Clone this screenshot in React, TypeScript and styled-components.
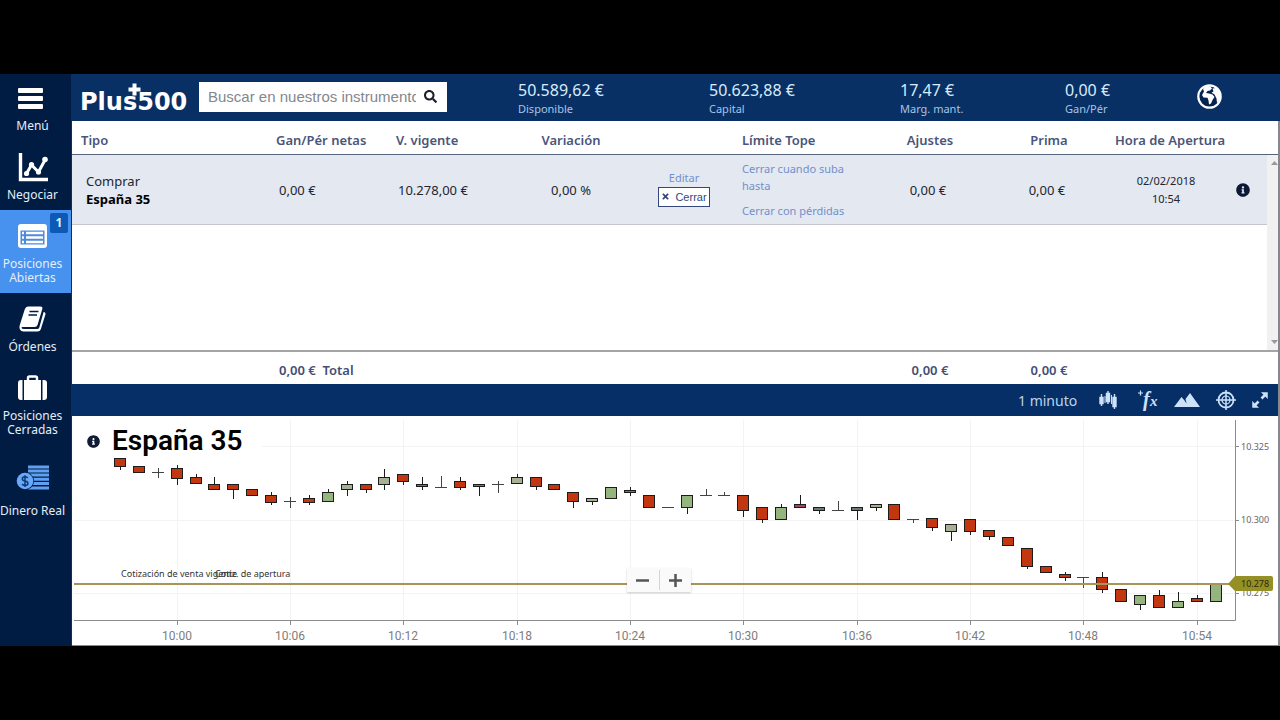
import React from "react";
import styled, { createGlobalStyle } from "styled-components";
import { FaSearch, FaInfoCircle, FaTimes } from "react-icons/fa";

const Global = createGlobalStyle`
  * { box-sizing: border-box; }
  body { margin: 0; background: #000; font-family: "Noto Sans", "Open Sans", sans-serif; }
  button, input, select { font-family: inherit; }
`;

const Page = styled.div`
  min-height: 100vh;
  display: flex;
  flex-direction: column;
  justify-content: center;
`;

const Shell = styled.div`
  display: flex;
  background: #011c42;
`;

/* ---------- Sidebar ---------- */

const Sidebar = styled.nav`
  flex: 0 0 72px;
  min-width: 0;
  display: flex;
  flex-direction: column;
  background: #011c42;
  border-right: 1px solid #0b2e63;
`;

const NavItem = styled.button<{ $active?: boolean; $first?: boolean; $roomy?: boolean }>`
  position: relative;
  display: flex;
  flex-direction: column;
  align-items: center;
  gap: ${(p) => (p.$roomy ? 12 : 7)}px;
  width: 100%;
  padding: ${(p) => (p.$roomy ? 19 : p.$first ? 10 : 12)}px 6px 8px 0;
  border: 0;
  background: ${(p) => (p.$active ? "#4792ee" : "transparent")};
  color: #e4edf8;
  font-size: 12px;
  line-height: 14px;
  text-align: center;
  cursor: pointer;
`;

const NavIcon = styled.span`
  display: flex;
  align-items: center;
  justify-content: center;
  height: 28px;
`;

const NavLabel = styled.span`
  white-space: pre;
`;

const Badge = styled.span`
  position: absolute;
  top: 3px;
  right: 3px;
  width: 18px;
  height: 20px;
  border-radius: 2px;
  background: #0c5ab5;
  color: #d8f0ff;
  font-size: 12px;
  font-weight: 700;
  line-height: 20px;
`;

/* ---------- Header ---------- */

const Main = styled.div`
  flex: 1;
  min-width: 0;
`;

const Header = styled.header`
  display: flex;
  align-items: center;
  height: 47px;
  padding-bottom: 2px;
  background: #083064;
`;

const Logo = styled.a`
  position: relative;
  flex: 0 0 119px;
  margin-left: 8px;
  padding-top: 10px;
  color: #fff;
  font-family: "DejaVu Sans", sans-serif;
  font-size: 24px;
  font-weight: 700;
  line-height: 28px;
  text-decoration: none;
`;

const LogoCross = styled.svg`
  position: absolute;
  left: 48px;
  top: 5px;
`;

const SearchBox = styled.label`
  display: flex;
  align-items: center;
  flex: 0 0 248px;
  height: 30px;
  padding: 0 10px 0 9px;
  background: #fff;
  color: #1a2029;
`;

const SearchInput = styled.input`
  flex: 1;
  min-width: 0;
  margin-right: 8px;
  padding: 0;
  border: 0;
  outline: 0;
  background: transparent;
  font-family: "Liberation Sans", sans-serif;
  font-size: 15px;
  &::placeholder { color: #84878b; opacity: 1; }
`;

const Stats = styled.div`
  flex: 1;
  display: grid;
  grid-template-columns: 191fr 191fr 165fr 131fr 84fr;
  align-items: center;
  padding-left: 71px;
`;

const Stat = styled.div`
  padding-top: 5px;
  color: #c5dcf5;
  white-space: nowrap;
`;

const StatValue = styled.div`
  font-size: 16px;
  line-height: 20px;
  color: #d8ebfc;
`;

const StatName = styled.div`
  font-size: 11px;
  line-height: 18px;
  color: #a9c4e6;
`;

const IconButton = styled.button<{ $w?: number }>`
  display: flex;
  align-items: center;
  justify-content: center;
  width: ${(p) => p.$w ?? 26}px;
  padding: 0;
  border: 0;
  background: transparent;
  color: inherit;
  cursor: pointer;
`;

/* ---------- Positions table ---------- */

const Panel = styled.section`
  background: #fff;
  border-right: 2px solid #85888d;
`;

const Table = styled.table`
  width: 100%;
  table-layout: fixed;
  border-collapse: separate;
  border-spacing: 0;
  font-size: 13px;
  color: #22262e;
`;

const Th = styled.th<{ $align?: string; $pad?: number }>`
  height: 34px;
  padding: 5px 0 0 ${(p) => p.$pad ?? 0}px;
  border-bottom: 1px solid #55637c;
  color: #4b557a;
  font-size: 13px;
  font-weight: 600;
  text-align: ${(p) => p.$align ?? "left"};
  white-space: nowrap;
`;

const Td = styled.td<{ $align?: string; $pad?: number }>`
  height: 70px;
  padding: 0 0 0 ${(p) => p.$pad ?? 0}px;
  background: #e4e8f1;
  border-bottom: 1px solid #c4c7cd;
  text-align: ${(p) => p.$align ?? "left"};
  line-height: 18px;
`;

const EmptyCell = styled.td`
  height: 125px;
  padding: 0;
`;

const TotalCell = styled.td<{ $align?: string; $pad?: number }>`
  height: 34px;
  padding: 3px 0 0 ${(p) => p.$pad ?? 0}px;
  border-top: 2px solid #a3a4a8;
  color: #444e74;
  font-weight: 600;
  text-align: ${(p) => p.$align ?? "left"};
  white-space: nowrap;
`;

const Shift = styled.span`
  display: inline-block;
  padding-right: 4px;
`;

const OpenTime = styled(Shift)`
  font-size: 11px;
`;

const Instrument = styled.strong`
  display: block;
  color: #000;
  font-weight: 700;
`;

const TextLink = styled.a`
  display: block;
  max-width: 110px;
  color: #7290cb;
  font-size: 11px;
  line-height: 17px;
  text-decoration: none;
  & + & { margin-top: 8px; }
`;

const Actions = styled.div`
  display: flex;
  flex-direction: column;
  align-items: center;
  gap: 1px;
  padding-bottom: 4px;
`;

const CloseButton = styled.button`
  display: flex;
  align-items: center;
  justify-content: center;
  gap: 5px;
  width: 52px;
  height: 20px;
  padding: 0;
  border: 1px solid #34477d;
  background: #fff;
  color: #34477d;
  font-family: "Liberation Sans", sans-serif;
  font-size: 11px;
`;

const TrackCell = styled.td`
  padding: 0;
  background: #f1f1f2;
`;

const Track = styled.div`
  display: flex;
  flex-direction: column;
  justify-content: space-between;
  align-items: flex-end;
  height: 195px;
  padding: 6px 0;
`;

/* ---------- Chart ---------- */

const Toolbar = styled.div`
  display: flex;
  align-items: center;
  justify-content: flex-end;
  gap: 16px;
  height: 32px;
  padding-right: 10px;
  background: #052f66;
  color: #cde2fa;
`;

const Interval = styled.select`
  appearance: none;
  width: 64px;
  padding: 0;
  border: 0;
  background: transparent;
  color: #bfd3ee;
  font-size: 14px;
`;

const ChartArea = styled.div`
  position: relative;
  border-bottom: 1px solid #8a8a8a;
`;

const ChartSvg = styled.svg`
  display: block;
  width: 100%;
  height: auto;
`;

const ChartTitle = styled.div`
  position: absolute;
  left: 15px;
  top: 8px;
  display: flex;
  align-items: center;
  gap: 12px;
  color: #111b33;
`;

const Heading = styled.h1`
  margin: 0;
  color: #000;
  font-family: Roboto, sans-serif;
  font-size: 28px;
  font-weight: 600;
  line-height: 34px;
`;

const Zoom = styled.div`
  position: absolute;
  left: 46%;
  bottom: 53px;
  display: flex;
  align-items: center;
  height: 24px;
  background: #fafafa;
  box-shadow: 0 1px 2px rgba(0, 0, 0, 0.2);
  color: #555;
`;

const ZoomButton = styled.button`
  display: flex;
  align-items: center;
  justify-content: center;
  width: 32px;
  height: 20px;
  padding: 0;
  border: 0;
  background: transparent;
  color: inherit;
  & + & { border-left: 1px solid #d4d4d4; }
`;

/* ---------- Icons ---------- */

const MenuIcon = () => (
  <svg width="29" height="22" viewBox="0 0 29 22" fill="#fff">
    <rect y="1" width="25" height="5" rx="1" />
    <rect y="9" width="25" height="5" rx="1" />
    <rect y="17" width="25" height="5" rx="1" />
  </svg>
);

const TradeIcon = () => (
  <svg width="30" height="30" viewBox="0 0 30 30" fill="none" stroke="#fff">
    <path d="M2.500 1V27.500H30" strokeWidth="3.400" />
    <path d="M8.500 21.500L13.500 13L20.500 20L27 8" strokeWidth="3" />
    <g fill="#fff" stroke="none">
      <circle cx="8.500" cy="21.500" r="2.600" />
      <circle cx="13.500" cy="12.500" r="2.600" />
      <circle cx="20.500" cy="20" r="2.600" />
      <circle cx="27" cy="7.500" r="2.800" />
    </g>
  </svg>
);

const ListIcon = () => (
  <svg width="29" height="24" viewBox="0 0 29 24">
    <rect width="29" height="24" rx="3" fill="#fff" />
    <path d="M2.500 6.500H26.500V20.500H2.500Z" fill="#4a8bdc" />
    <path d="M4 9H6M8 9H25M4 13.500H6M8 13.500H25M4 18H6M8 18H25" stroke="#fff" strokeWidth="2.400" />
  </svg>
);

const BookIcon = () => (
  <svg width="27" height="26" viewBox="0 0 27 26">
    <path d="M9 0.500H21.500Q24 0.500 23.300 3L18.500 19Q17.900 21 15.700 21H3.500Q2.500 21 2.500 21.900Q2.800 23 5 23H18Q19.800 23 20.300 21.500L24.600 6Q27 6.500 26.400 8.500L21.800 23.200Q21 25.500 18.500 25.500H4.500Q1.500 25.500 0.600 22.500Q0.200 21 0.800 19L5.800 3.200Q6.700 0.500 9 0.500Z" fill="#fff" />
    <path d="M10.500 5.500H19.500M9.500 9H18" stroke="#011c42" strokeWidth="1.500" />
  </svg>
);

const CaseIcon = () => (
  <svg width="29" height="26" viewBox="0 0 29 26">
    <path d="M10 6V3Q10 1.500 11.500 1.500H17.500Q19 1.500 19 3V6" fill="none" stroke="#fff" strokeWidth="2.400" />
    <path d="M3 5H4.500V25H3Q0 25 0 22V8Q0 5 3 5ZM6 5H23V25H6ZM24.500 5H26Q29 5 29 8V22Q29 25 26 25H24.500Z" fill="#fff" />
  </svg>
);

const MoneyIcon = () => (
  <svg width="33" height="26" viewBox="0 0 33 26">
    <path d="M12 2H33M12 6H33M12 10H33M14 14.300H33M14 18.600H33M12 23H33" stroke="#5fa0f2" strokeWidth="3" />
    <circle cx="9" cy="16" r="9" fill="#011c42" />
    <circle cx="9" cy="16" r="8.300" fill="#6aa9f7" />
    <path d="M11.800 13Q11 11.800 9 11.800Q6.300 11.800 6.300 13.800Q6.300 15.500 9 16Q11.900 16.500 11.900 18.400Q11.900 20.400 9 20.400Q6.900 20.400 6 19M9 10.200V22" fill="none" stroke="#0b3a78" strokeWidth="1.500" />
  </svg>
);

const GlobeIcon = () => (
  <svg width="25" height="25" viewBox="0 0 25 25">
    <circle cx="12.500" cy="12.500" r="11.200" fill="#062350" stroke="#fff" strokeWidth="2.200" />
    <path d="M8 3L13 2L15 4.500L13 6.500L10.500 7L9 9L12 9.500L15.500 10.500L17.500 13L15.500 16L14 19.500L12 20.500L11.500 16.500L10.500 13.800L6.500 13.500L5 11L7 7.500L6 5Z" fill="#fff" />
    <path d="M15.500 4.500L19 4L23 8.500L23 15L20 19L19.500 14.500L17.500 10.500L14.500 8.500L16.500 7.500Z" fill="#fff" />
  </svg>
);

const CandlesIcon = () => (
  <svg width="20" height="20" viewBox="0 0 20 20" fill="#cde2fa" stroke="#cde2fa">
    <path d="M3.500 4V16M10 1V14M16.500 4V19" strokeWidth="1.400" />
    <path d="M2 7.500H5V13.500H2ZM8.500 3.500H11.500V11.500H8.500ZM15 7.500H18V16.500H15Z" strokeWidth="1.400" />
    <path d="M7 6V13M13.500 5V14" strokeWidth="1" />
  </svg>
);

const FunctionIcon = () => (
  <svg width="24" height="24" viewBox="0 0 24 24" fill="#cde2fa">
    <path d="M6.500 2.500V7.500M4 5H9" stroke="#cde2fa" strokeWidth="1.200" />
    <text x="9" y="18" fontFamily="Liberation Serif, serif" fontStyle="italic" fontWeight="700" fontSize="20">f</text>
    <text x="16" y="18" fontFamily="Liberation Serif, serif" fontStyle="italic" fontWeight="700" fontSize="15">x</text>
  </svg>
);

const AreaIcon = () => (
  <svg width="26" height="16" viewBox="0 0 26 16" fill="#cde2fa">
    <path d="M0 15L7.500 5L10.500 8.500L12.500 11.500L11.500 7L16 1L26 15Z" />
  </svg>
);

const TargetIcon = () => (
  <svg width="20" height="20" viewBox="0 0 20 20" fill="none" stroke="#cde2fa">
    <circle cx="10" cy="10" r="7.500" strokeWidth="1.800" />
    <circle cx="10" cy="10" r="4" strokeWidth="1.200" />
    <path d="M10 0V20M0 10H20" strokeWidth="1.500" />
  </svg>
);

const ExpandIcon = () => (
  <svg width="16" height="16" viewBox="0 0 16 16" fill="#cde2fa" stroke="#cde2fa">
    <path d="M9.500 0.500H15.500V6.500ZM0.500 9.500V15.500H6.500Z" strokeWidth="0.500" />
    <path d="M13 3L9.500 6.500M3 13L6.500 9.500" strokeWidth="2.600" />
  </svg>
);

/* ---------- Data ---------- */

const stats = [
  ["50.589,62 €", "Disponible"],
  ["50.623,88 €", "Capital"],
  ["17,47 €", "Marg. mant."],
  ["0,00 €", "Gan/Pér"],
];

/* relative column weights */
const columns = [204, 120, 115, 120, 106, 133, 120, 118, 120, 39, 11];
const columnTotal = columns.reduce((a, b) => a + b, 0);

/* kind (r red, g green, a pale, n grey, p pink, l flat), body top, body bottom, high, low */
type Candle = [string, number, number, number, number];
const candles: Candle[] = [
  ["r", 42, 50, 42, 53], ["r", 50, 56, 50, 56], ["l", 56, 56, 52, 61], ["r", 52, 62, 49, 68],
  ["r", 61, 67, 58, 67], ["r", 68, 73, 61, 73], ["r", 68, 73, 68, 82], ["r", 73, 79, 73, 79],
  ["r", 79, 86, 76, 88], ["l", 85, 85, 81, 91], ["r", 82, 86, 79, 88], ["g", 76, 85, 73, 85],
  ["a", 68, 73, 65, 79], ["r", 68, 73, 68, 76], ["a", 61, 68, 53, 73], ["r", 58, 65, 58, 68],
  ["n", 68, 70, 61, 73], ["l", 71, 71, 60, 71], ["r", 65, 71, 61, 73], ["n", 68, 70, 68, 79],
  ["l", 68, 68, 65, 76], ["a", 61, 67, 58, 67], ["r", 61, 70, 61, 73], ["r", 68, 73, 68, 73],
  ["r", 76, 85, 76, 91], ["a", 82, 85, 82, 88], ["g", 71, 82, 71, 82], ["n", 74, 76, 71, 79],
  ["r", 79, 91, 79, 91], ["l", 91, 91, 91, 91], ["g", 79, 91, 79, 97], ["l", 79, 79, 73, 79],
  ["l", 79, 79, 76, 79], ["r", 79, 94, 79, 100], ["r", 91, 103, 91, 106], ["g", 91, 103, 88, 103],
  ["p", 88, 91, 79, 91], ["n", 91, 94, 91, 97], ["l", 94, 94, 85, 94], ["n", 91, 94, 91, 103],
  ["a", 88, 91, 88, 94], ["r", 88, 103, 88, 103], ["l", 103, 103, 103, 106], ["r", 102, 111, 102, 114],
  ["a", 108, 115, 108, 124], ["r", 103, 115, 103, 118], ["r", 114, 120, 114, 123], ["r", 121, 129, 121, 129],
  ["r", 132, 150, 132, 152], ["r", 150, 156, 150, 156], ["r", 158, 161, 156, 164], ["l", 161, 161, 161, 171],
  ["r", 161, 173, 156, 176], ["r", 173, 185, 173, 185], ["g", 179, 188, 179, 193], ["r", 179, 191, 174, 191],
  ["g", 185, 191, 176, 191], ["r", 182, 185, 179, 185], ["g", 168, 185, 168, 185],
];
const fills: Record<string, string> = {
  r: "#c2370f", g: "#94b57e", a: "#a5b095", n: "#6c7a74", p: "#a6455a",
};
const timeLabels = ["10:00", "10:06", "10:12", "10:18", "10:24", "10:30", "10:36", "10:42", "10:48", "10:54"];
const candleX = (i: number) => Math.round(48 + i * 18.89);

const PriceChart = () => (
  <ChartSvg viewBox="0 0 1206 229" role="img" aria-label="España 35, 1 minuto">
    <g stroke="#f3f3f3" shapeRendering="crispEdges">
      {timeLabels.map((t, i) => (
        <line key={t} x1={candleX(3 + i * 6) + 0.5} x2={candleX(3 + i * 6) + 0.5} y1={i < 1 ? 48 : 4} y2="204" />
      ))}
      <path d="M190 30.500H1163M2 104.500H1163M2 177.500H1163" />
    </g>
    <g fontFamily="Noto Sans, sans-serif" fontSize="9" fill="#333">
      <text x="49" y="161">Cotización de venta vigente</text>
      <text x="143" y="161">Cotiz. de apertura</text>
    </g>
    <g shapeRendering="crispEdges">
      {candles.map(([kind, top, bottom, high, low], i) => {
        const x = candleX(i);
        return (
          <g key={i} stroke={kind === "l" ? "#444" : "#1c1c1c"}>
            <line x1={x + 0.5} x2={x + 0.5} y1={high} y2={low + 1} />
            {kind === "l" ? (
              <line x1={x - 6} x2={x + 6} y1={top + 0.5} y2={top + 0.5} />
            ) : (
              <rect x={x - 5.5} y={top + 0.5} width="11" height={bottom - top} fill={fills[kind]} />
            )}
          </g>
        );
      })}
    </g>
    <rect x="2" y="167" width="1158" height="2" fill="#a79456" />
    <path d="M1163.500 4V204.500M2 204.500H1163.500" stroke="#8c8c8c" fill="none" />
    <g stroke="#8c8c8c">
      {timeLabels.map((t, i) => (
        <line key={t} x1={candleX(3 + i * 6) + 0.5} x2={candleX(3 + i * 6) + 0.5} y1="204" y2="209" />
      ))}
      <path d="M1163 30.500H1167M1163 104.500H1167M1163 177.500H1167" />
    </g>
    <g fontFamily="Roboto, sans-serif" fontSize="12" fill="#7d7d7d" textAnchor="middle">
      {timeLabels.map((t, i) => (
        <text key={t} x={candleX(3 + i * 6)} y="224">{t}</text>
      ))}
    </g>
    <g fontFamily="Noto Sans, sans-serif" fontSize="9" fill="#666">
      <text x="1169" y="34">10.325</text>
      <text x="1169" y="107">10.300</text>
      <text x="1169" y="180">10.275</text>
      <path d="M1156 168L1163 160H1199Q1201 160 1201 162V173Q1201 175 1199 175H1163Z" fill="#959026" />
      <text x="1169" y="171" fill="#2b2a0c">10.278</text>
    </g>
  </ChartSvg>
);

export default function App() {
  return (
    <>
      <Global />
      <Page>
        <Shell>
          <Sidebar>
            <NavItem $first><NavIcon><MenuIcon /></NavIcon><NavLabel>Menú</NavLabel></NavItem>
            <NavItem><NavIcon><TradeIcon /></NavIcon><NavLabel>Negociar</NavLabel></NavItem>
            <NavItem $active>
              <NavIcon><ListIcon /></NavIcon>
              <NavLabel>{"Posiciones\nAbiertas"}</NavLabel>
              <Badge>1</Badge>
            </NavItem>
            <NavItem><NavIcon><BookIcon /></NavIcon><NavLabel>Órdenes</NavLabel></NavItem>
            <NavItem><NavIcon><CaseIcon /></NavIcon><NavLabel>{"Posiciones\nCerradas"}</NavLabel></NavItem>
            <NavItem $roomy><NavIcon><MoneyIcon /></NavIcon><NavLabel>Dinero Real</NavLabel></NavItem>
          </Sidebar>
          <Main>
            <Header>
              <Logo href="#">
                Plus500
                <LogoCross width="13" height="13" viewBox="0 0 13 13" fill="#fff">
                  <path d="M4.500 0.500H8.500V4.500H12.500V8.500H8.500V12.500H4.500V8.500H0.500V4.500H4.500Z" />
                </LogoCross>
              </Logo>
              <SearchBox>
                <SearchInput type="text" aria-label="Buscar" placeholder="Buscar en nuestros instrumentos" />
                <FaSearch size={13} />
              </SearchBox>
              <Stats>
                {stats.map(([value, name]) => (
                  <Stat key={name}>
                    <StatValue>{value}</StatValue>
                    <StatName>{name}</StatName>
                  </Stat>
                ))}
                <IconButton aria-label="Idioma"><GlobeIcon /></IconButton>
              </Stats>
            </Header>
            <Panel>
              <Table>
                <colgroup>
                  {columns.map((w, i) => <col key={i} style={{ width: `${(w / columnTotal) * 100}%` }} />)}
                </colgroup>
                <thead>
                  <tr>
                    <Th $pad={9}>Tipo</Th>
                    <Th>Gan/Pér netas</Th>
                    <Th>V. vigente</Th>
                    <Th $align="center">Variación</Th>
                    <Th />
                    <Th $pad={5}>Límite Tope</Th>
                    <Th $align="center">Ajustes</Th>
                    <Th $align="center">Prima</Th>
                    <Th $align="center" $pad={4}>Hora de Apertura</Th>
                    <Th />
                    <Th />
                  </tr>
                </thead>
                <tbody>
                  <tr>
                    <Td $pad={14}>Comprar<Instrument>España 35</Instrument></Td>
                    <Td $pad={3}>0,00 €</Td>
                    <Td $pad={2}>10.278,00 €</Td>
                    <Td $align="center">0,00 %</Td>
                    <Td>
                      <Actions>
                        <TextLink href="#">Editar</TextLink>
                        <CloseButton><FaTimes size={9} />Cerrar</CloseButton>
                      </Actions>
                    </Td>
                    <Td $pad={5}>
                      <TextLink href="#">Cerrar cuando suba hasta</TextLink>
                      <TextLink href="#">Cerrar con pérdidas</TextLink>
                    </Td>
                    <Td $align="center"><Shift>0,00 €</Shift></Td>
                    <Td $align="center"><Shift>0,00 €</Shift></Td>
                    <Td $align="center"><OpenTime>02/02/2018<br />10:54</OpenTime></Td>
                    <Td $pad={8}>
                      <IconButton $w={14} aria-label="Información"><FaInfoCircle size={14} color="#0b1836" /></IconButton>
                    </Td>
                    <TrackCell rowSpan={2}>
                      <Track>
                        <svg width="7" height="4" viewBox="0 0 7 4"><path d="M0 4L3.500 0L7 4Z" fill="#999" /></svg>
                        <svg width="7" height="4" viewBox="0 0 7 4"><path d="M0 0L3.500 4L7 0Z" fill="#999" /></svg>
                      </Track>
                    </TrackCell>
                  </tr>
                  <tr><EmptyCell colSpan={10} /></tr>
                </tbody>
                <tfoot>
                  <tr>
                    <TotalCell />
                    <TotalCell $pad={3}>0,00 €&nbsp; Total</TotalCell>
                    <TotalCell colSpan={4} />
                    <TotalCell $align="center">0,00 €</TotalCell>
                    <TotalCell $align="center">0,00 €</TotalCell>
                    <TotalCell colSpan={3} />
                  </tr>
                </tfoot>
              </Table>
              <Toolbar>
                <Interval aria-label="Intervalo" defaultValue="1"><option value="1">1 minuto</option></Interval>
                <IconButton $w={20} aria-label="Velas"><CandlesIcon /></IconButton>
                <IconButton $w={24} aria-label="Indicadores"><FunctionIcon /></IconButton>
                <IconButton $w={26} aria-label="Área"><AreaIcon /></IconButton>
                <IconButton $w={20} aria-label="Cursor"><TargetIcon /></IconButton>
                <IconButton $w={16} aria-label="Ampliar"><ExpandIcon /></IconButton>
              </Toolbar>
              <ChartArea>
                <PriceChart />
                <ChartTitle>
                  <FaInfoCircle size={13} />
                  <Heading>España 35</Heading>
                </ChartTitle>
                <Zoom>
                  <ZoomButton aria-label="Alejar">
                    <svg width="13" height="13" viewBox="0 0 13 13"><path d="M0 6.500H13" stroke="#555" strokeWidth="2.500" /></svg>
                  </ZoomButton>
                  <ZoomButton aria-label="Acercar">
                    <svg width="13" height="13" viewBox="0 0 13 13"><path d="M0 6.500H13M6.500 0V13" stroke="#555" strokeWidth="2.500" /></svg>
                  </ZoomButton>
                </Zoom>
              </ChartArea>
            </Panel>
          </Main>
        </Shell>
      </Page>
    </>
  );
}
